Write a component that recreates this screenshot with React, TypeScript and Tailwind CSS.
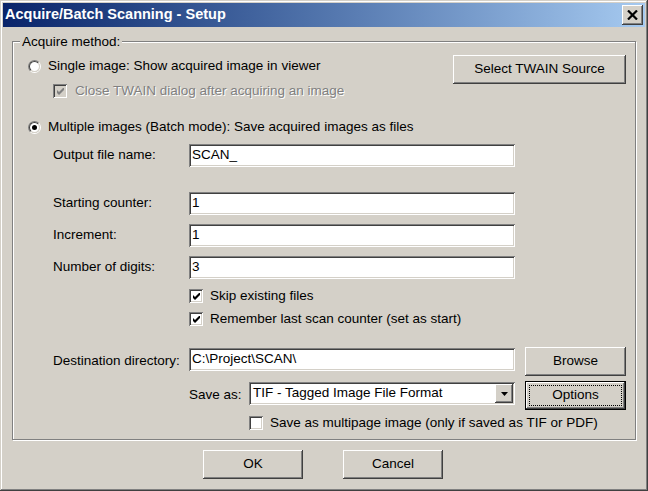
import React from 'react';

const raised =
  'shadow-[inset_-1px_-1px_0_#404040,inset_1px_1px_0_#fff,inset_-2px_-2px_0_#808080]';
const sunken =
  'shadow-[inset_1px_1px_0_#808080,inset_-1px_-1px_0_#fff,inset_2px_2px_0_#404040,inset_-2px_-2px_0_#d4d0c8]';

const Button = ({
  children,
  className = '',
  isDefault = false,
}: {
  children: React.ReactNode;
  className?: string;
  isDefault?: boolean;
}) => (
  <div
    className={`relative flex h-[29px] shrink-0 items-center justify-center bg-[#d4d0c8] text-black ${raised} ${
      isDefault ? 'border border-black' : ''
    } ${className}`}
  >
    {isDefault && <span className="absolute inset-[3px] border border-dotted border-black" />}
    <span className="relative">{children}</span>
  </div>
);

const Radio = ({ checked = false }: { checked?: boolean }) => (
  <span className="flex h-[13px] w-[13px] shrink-0 rounded-full border border-t-[#808080] border-l-[#808080] border-r-white border-b-white">
    <span className="flex flex-1 items-center justify-center rounded-full border border-t-[#404040] border-l-[#404040] border-r-[#d4d0c8] border-b-[#d4d0c8] bg-white">
      {checked && <span className="h-[5px] w-[5px] rounded-full bg-black" />}
    </span>
  </span>
);

const Check = ({ checked = false, disabled = false }: { checked?: boolean; disabled?: boolean }) => (
  <span
    className={`flex h-[14px] w-[14px] shrink-0 items-center justify-center ${
      disabled ? 'bg-[#d4d0c8]' : 'bg-white'
    } ${sunken}`}
  >
    {checked && (
      <svg width="7" height="7" viewBox="0 0 7 7">
        <polygon points="0,2 2,4 7,-1 7,2 2,7 0,5" fill={disabled ? '#808080' : '#000'} />
      </svg>
    )}
  </span>
);

const Field = ({ value, className = '' }: { value: string; className?: string }) => (
  <div className={`flex h-[23px] shrink-0 items-center bg-white px-[3px] text-black ${sunken} ${className}`}>
    {value}
  </div>
);

const FormRow = ({ label, value, className = '' }: { label: string; value: string; className?: string }) => (
  <div className={`ml-[40px] flex items-center ${className}`}>
    <span className="w-[136px]">{label}</span>
    <Field value={value} className="w-[326px]" />
  </div>
);

export default function App() {
  return (
    <div
      className="flex h-[491px] w-[648px] flex-col bg-[#d4d0c8] p-[3px] font-['Liberation_Sans',Arial,sans-serif] text-[13.5px] text-black shadow-[inset_-1px_-1px_0_#404040,inset_1px_1px_0_#d4d0c8,inset_-2px_-2px_0_#808080,inset_2px_2px_0_#fff]"
    >
      {/* Title bar */}
      <div className="flex h-[24px] shrink-0 items-center justify-between bg-linear-to-r from-[#0a246a] to-[#a6caf0] px-[2px]">
        <span className="text-[14.5px] font-bold text-white">Acquire/Batch Scanning - Setup</span>
        <div className={`flex h-[20px] w-[21px] items-center justify-center bg-[#d4d0c8] ${raised}`}>
          <svg width="11" height="10" viewBox="0 0 11 10">
            <path d="M1 0.5 L10 9.5 M10 0.5 L1 9.5" stroke="#000" strokeWidth="2.2" />
          </svg>
        </div>
      </div>

      {/* Acquire method group */}
      <div className="relative ml-[9px] mt-[14px] flex h-[399px] w-[624px] shrink-0 flex-col border border-[#808080] shadow-[inset_1px_1px_0_#fff,1px_1px_0_#fff]">
        <span className="absolute -top-[8px] left-[7px] bg-[#d4d0c8] px-[2px] leading-[15px]">Acquire method:</span>

        <div className="flex items-start">
          <div className="flex flex-1 flex-col">
            <div className="ml-[15px] mt-[15px] flex h-[18px] items-center gap-[7px]">
              <Radio />
              <span>Single image: Show acquired image in viewer</span>
            </div>
            <div className="ml-[40px] mt-[7px] flex h-[18px] items-center gap-[8px]">
              <Check checked disabled />
              <span className="text-[#808080] [text-shadow:1px_1px_0_#fff]">
                Close TWAIN dialog after acquiring an image
              </span>
            </div>
          </div>
          <Button className="mr-[9px] mt-[13px] w-[173px]">Select TWAIN Source</Button>
        </div>

        <div className="ml-[15px] mt-[18px] flex h-[18px] items-center gap-[7px]">
          <Radio checked />
          <span>Multiple images (Batch mode): Save acquired images as files</span>
        </div>

        <FormRow className="mt-[8px]" label="Output file name:" value="SCAN_" />
        <FormRow className="mt-[25px]" label="Starting counter:" value="1" />
        <FormRow className="mt-[9px]" label="Increment:" value="1" />
        <FormRow className="mt-[9px]" label="Number of digits:" value="3" />

        <div className="ml-[176px] mt-[8px] flex h-[18px] items-center gap-[7px]">
          <Check checked />
          <span>Skip existing files</span>
        </div>
        <div className="ml-[176px] mt-[5px] flex h-[18px] items-center gap-[7px]">
          <Check checked />
          <span>Remember last scan counter (set as start)</span>
        </div>

        <div className="ml-[40px] mt-[19px] flex items-start">
          <span className="w-[136px] self-center">Destination directory:</span>
          <Field value="C:\Project\SCAN\" className="mt-[1px] w-[326px]" />
          <Button className="ml-[10px] w-[101px]">Browse</Button>
        </div>

        <div className="ml-[176px] mt-[5px] flex items-start">
          <span className="w-[60px] self-center">Save as:</span>
          <div className={`mt-[1px] flex h-[23px] w-[266px] items-center bg-white p-[2px] ${sunken}`}>
            <span className="flex-1 pl-[2px]">TIF - Tagged Image File Format</span>
            <div className={`flex h-full w-[18px] items-center justify-center bg-[#d4d0c8] ${raised}`}>
              <svg width="7" height="4" viewBox="0 0 7 4">
                <polygon points="0,0 7,0 3.5,4" fill="#000" />
              </svg>
            </div>
          </div>
          <Button isDefault className="ml-[10px] w-[101px]">
            Options
          </Button>
        </div>

        <div className="ml-[236px] mt-[4px] flex h-[18px] items-center gap-[7px]">
          <Check />
          <span>Save as multipage image (only if saved as TIF or PDF)</span>
        </div>
      </div>

      {/* Dialog buttons */}
      <div className="ml-[200px] mt-[10px] flex gap-[40px]">
        <Button className="w-[100px]">OK</Button>
        <Button className="w-[100px]">Cancel</Button>
      </div>
    </div>
  );
}
